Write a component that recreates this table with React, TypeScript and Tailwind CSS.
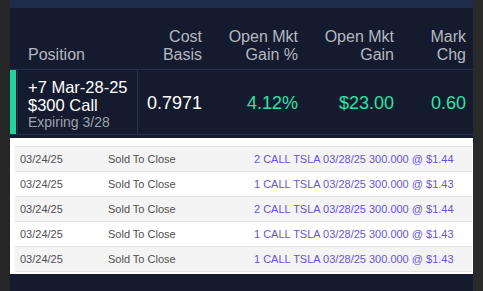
import React from 'react';

const trades = [
  { date: '03/24/25', action: 'Sold To Close', desc: '2 CALL TSLA 03/28/25 300.000 @ $1.44' },
  { date: '03/24/25', action: 'Sold To Close', desc: '1 CALL TSLA 03/28/25 300.000 @ $1.43' },
  { date: '03/24/25', action: 'Sold To Close', desc: '2 CALL TSLA 03/28/25 300.000 @ $1.44' },
  { date: '03/24/25', action: 'Sold To Close', desc: '1 CALL TSLA 03/28/25 300.000 @ $1.43' },
  { date: '03/24/25', action: 'Sold To Close', desc: '1 CALL TSLA 03/28/25 300.000 @ $1.43' },
];

const HeaderCell = ({ lines, w }: { lines: string[]; w: string }) => (
  <div className={`${w} flex flex-col items-end justify-end text-right`}>
    {lines.map((l) => (
      <span key={l} className="leading-[18px]">
        {l}
      </span>
    ))}
  </div>
);

export default function App() {
  return (
    <div
      className="flex w-[483px] h-[291px] bg-[#262626] overflow-hidden"
      style={{ fontFamily: '"Liberation Sans", Arial, sans-serif' }}
    >
      <div className="w-[10px] shrink-0 bg-[#262626]" />
      <div className="w-[463px] shrink-0 flex flex-col bg-[#141b2e]">
        {/* top band */}
        <div className="h-[8px] bg-[#1e2c4c]" />

        {/* header */}
        <div className="h-[62px] flex text-[16px] text-[#b4b8c0] pb-[5px] border-b border-[#243150]">
          <div className="w-[127px] flex items-end pl-[18px]">
            <span className="leading-[18px]">Position</span>
          </div>
          <HeaderCell lines={['Cost', 'Basis']} w="w-[65px]" />
          <HeaderCell lines={['Open Mkt', 'Gain %']} w="w-[96px]" />
          <HeaderCell lines={['Open Mkt', 'Gain']} w="w-[96px]" />
          <HeaderCell lines={['Mark', 'Chg']} w="w-[72px]" />
        </div>

        {/* position row */}
        <div className="h-[65px] flex border-b border-[#243150]">
          <div className="w-[6px] bg-[#22d39b]" />
          <div className="w-[121px] flex flex-col justify-center pt-[4px] pl-[10px] ml-[1px] border-l border-r border-[#243150] text-white">
            <span className="text-[16.5px] leading-[18px]">+7 Mar-28-25</span>
            <span className="text-[16.5px] leading-[18px]">$300 Call</span>
            <span className="text-[14px] leading-[16px] text-[#9ca1aa]">Expiring 3/28</span>
          </div>
          <div className="w-[64px] flex items-center justify-end pt-[3px] text-[18px] text-white">0.7971</div>
          <div className="w-[96px] flex items-center justify-end pt-[3px] text-[18px] text-[#2ee3a6]">4.12%</div>
          <div className="w-[96px] flex items-center justify-end pt-[3px] text-[18px] text-[#2ee3a6]">$23.00</div>
          <div className="w-[72px] flex items-center justify-end pt-[3px] text-[18px] text-[#2ee3a6]">0.60</div>
        </div>

        {/* trades panel */}
        <div className="mt-[3px] h-[136px] bg-white pl-[5px] pr-[1px] pt-[8px] flex flex-col">
          <div className="border-t border-[#e2e2e2]">
            {trades.map((t, i) => (
              <div
                key={i}
                className={`h-[25px] flex items-center text-[11px] border-b border-[#e2e2e2] ${
                  i % 2 === 0 ? 'bg-[#f4f4f4]' : 'bg-white'
                }`}
              >
                <span className="w-[93px] pl-[5px] text-[#505050]">{t.date}</span>
                <span className="w-[146px] text-[#505050]">{t.action}</span>
                <span className="text-[#6454d8]">{t.desc}</span>
              </div>
            ))}
          </div>
        </div>
        <div className="flex-1" />
      </div>
      <div className="w-[10px] shrink-0 bg-[#2a2a2a]" />
    </div>
  );
}
